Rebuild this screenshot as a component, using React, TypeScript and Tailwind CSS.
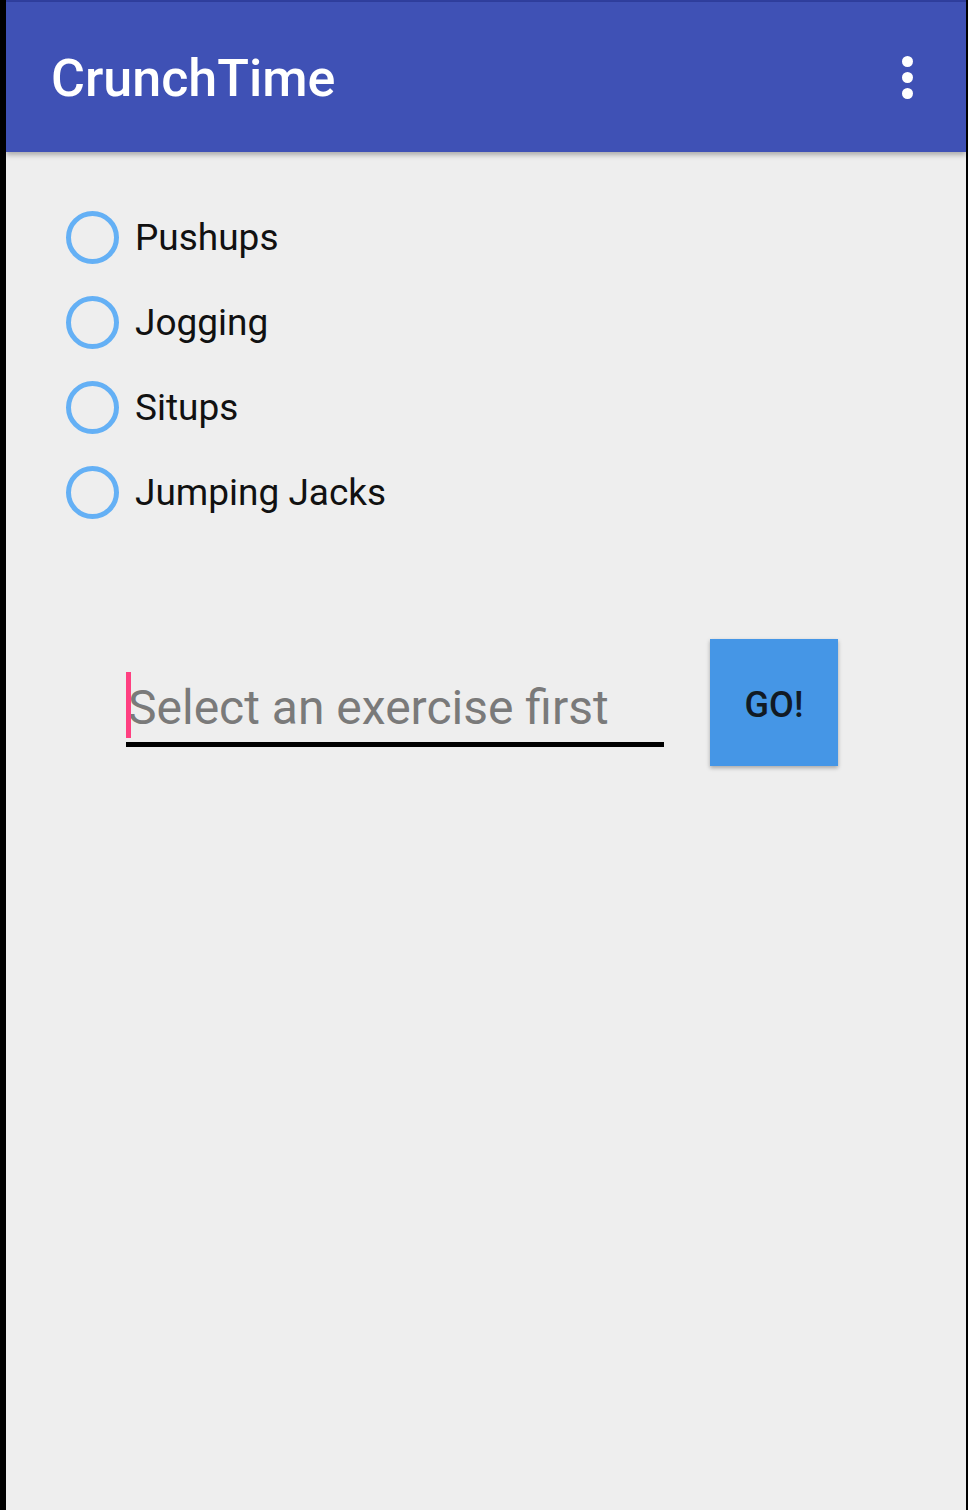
const exercises = ['Pushups', 'Jogging', 'Situps', 'Jumping Jacks']

export default function App() {
  return (
    <div className="flex w-[968px] h-[1510px] bg-black" style={{ fontFamily: 'Roboto, "Noto Sans", sans-serif' }}>
      <div className="w-[6px] shrink-0" />
      <div className="flex-1 flex flex-col bg-[#EEEEEE]">
        {/* App bar */}
        <div className="h-[2px] bg-[#303F9F]" />
        <div className="relative z-10 h-[150px] bg-[#3F51B5] flex items-center justify-between pl-[45px] pr-[53px] shadow-[0_3px_5px_rgba(0,0,0,0.28)]">
          <h1 className="pt-[4px] text-[52px] font-medium text-white leading-none">CrunchTime</h1>
          <div className="flex flex-col gap-[5px]">
            <span className="w-[11px] h-[11px] rounded-full bg-white" />
            <span className="w-[11px] h-[11px] rounded-full bg-white" />
            <span className="w-[11px] h-[11px] rounded-full bg-white" />
          </div>
        </div>

        {/* Exercise choices */}
        <div className="pt-[43px] pl-[60px]">
          {exercises.map(name => (
            <label key={name} className="flex items-center h-[85px] gap-[16px]">
              <span className="w-[53px] h-[53px] rounded-full border-[5px] border-[#64B0F5] shrink-0" />
              <span className="text-[37px] text-[#111] leading-none">{name}</span>
            </label>
          ))}
        </div>

        {/* Input + button */}
        <div className="flex items-start mt-[104px] pl-[120px] gap-[46px]">
          <div className="w-[538px] pt-[33px]">
            <div className="relative h-[70px]">
              <span className="absolute left-0 top-0 w-[5px] h-[66px] bg-[#FF4081]" />
              <span className="block pl-[2px] text-[48px] leading-[72px] text-[#7a7a7a] whitespace-nowrap">
                Select an exercise first
              </span>
            </div>
            <div className="h-[5px] bg-black" />
          </div>
          <button className="w-[128px] h-[127px] pt-[4px] bg-[#4596E6] text-[36px] font-medium text-[#111a24] shadow-[0_2px_4px_rgba(0,0,0,0.3)]">
            GO!
          </button>
        </div>
      </div>
      <div className="w-[2px] shrink-0" />
    </div>
  )
}
